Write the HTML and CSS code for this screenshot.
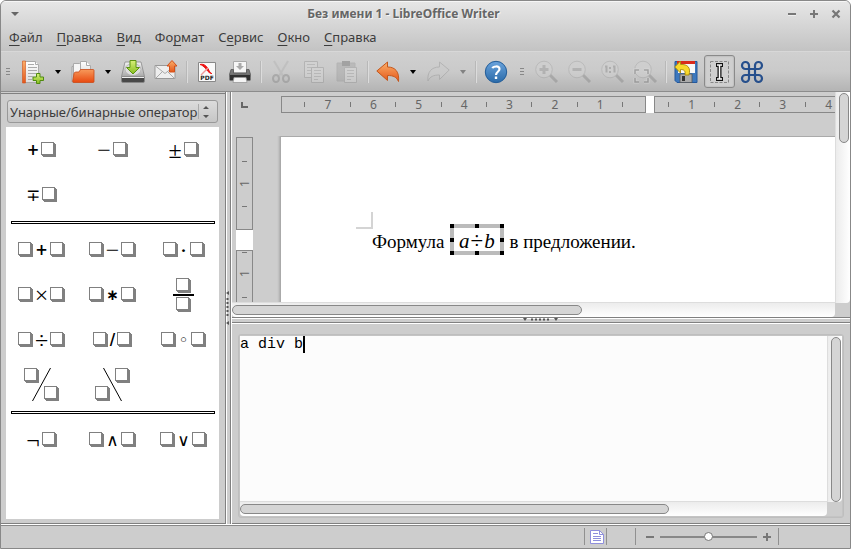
FILE: index.html
```html
<!DOCTYPE html>
<html lang="ru">
<head>
<meta charset="utf-8">
<title>Без имени 1 - LibreOffice Writer</title>
<link rel="stylesheet" href="styles.css">
</head>
<body>
<svg class="defs" width="0" height="0" aria-hidden="true">
  <defs>
    <linearGradient id="orange" x1="0" y1="0" x2="0" y2="1"><stop offset="0" stop-color="#fbb06a"/><stop offset="1" stop-color="#e4561a"/></linearGradient>
    <linearGradient id="green" x1="0" y1="0" x2="0" y2="1"><stop offset="0" stop-color="#d8f07a"/><stop offset="1" stop-color="#86bd1e"/></linearGradient>
    <linearGradient id="paper" x1="0" y1="0" x2="0" y2="1"><stop offset="0" stop-color="#ffffff"/><stop offset="1" stop-color="#dcdcdc"/></linearGradient>
    <linearGradient id="blue" x1="0" y1="0" x2="0" y2="1"><stop offset="0" stop-color="#6aa3dc"/><stop offset="1" stop-color="#2a6aa8"/></linearGradient>
    <linearGradient id="metal" x1="0" y1="0" x2="0" y2="1"><stop offset="0" stop-color="#f4f4f4"/><stop offset="1" stop-color="#a8a8a8"/></linearGradient>
    <linearGradient id="fold" x1="0" y1="0" x2="0" y2="1"><stop offset="0" stop-color="#f79a5b"/><stop offset="1" stop-color="#e8480f"/></linearGradient>
  </defs>
</svg>
<div class="window">
  <div class="chrome">
    <header class="titlebar">
      <button class="win-btn" aria-label="Меню окна"><svg width="10" height="6" viewBox="0 0 10 6"><path d="M1 1h8L5 5z" fill="#666"/></svg></button>
      <h1>Без имени 1 - LibreOffice Writer</h1>
      <div class="win-btns">
        <button class="win-btn" aria-label="Свернуть"><svg width="10" height="10" viewBox="0 0 10 10"><path d="M1 6h8" stroke="#fff"/><path d="M1 5h8" stroke="#777" stroke-width="2"/></svg></button>
        <button class="win-btn" aria-label="Развернуть"><svg width="10" height="10" viewBox="0 0 10 10"><path d="M1 5h8M5 1v8" stroke="#777" stroke-width="2"/></svg></button>
        <button class="win-btn" aria-label="Закрыть"><svg width="10" height="10" viewBox="0 0 10 10"><path d="M1.500 1.500l7 7M8.500 1.500l-7 7" stroke="#777" stroke-width="2.200"/></svg></button>
      </div>
    </header>
    <nav class="menubar">
      <a href="#"><u>Ф</u>айл</a><a href="#"><u>П</u>равка</a><a href="#"><u>В</u>ид</a><a href="#">Фо<u>р</u>мат</a><a href="#">С<u>е</u>рвис</a><a href="#"><u>О</u>кно</a><a href="#"><u>С</u>правка</a>
    </nav>
  </div>
  <div class="toolbar">
    <span class="grip"></span>
    <button class="tool" aria-label="Создать"><svg viewBox="0 0 24 24"><path d="M3.500 1.500h11l3 3v18h-14z" fill="url(#paper)" stroke="#aaa"/><path d="M14.500 1.500v3h3" fill="#fff" stroke="#aaa"/><path d="M1.500 1h3v22h-3z" fill="url(#orange)" stroke="#d0521c" stroke-width=".6"/><path d="M7 4.500h6M7 7.500h9M7 10.500h9M7 13.500h8M7 16.500h5M7 19.500h4" stroke="#aaa"/><path d="M15.500 13.500h3.500v3.500h3.500v3.500h-3.500v3h-3.500v-3h-3.500v-3.500h3.500z" fill="url(#green)" stroke="#4f8a10"/></svg></button>
    <button class="drop" aria-label="Варианты создания"><svg viewBox="0 0 6 4"><path d="M0 0h6L3 4z"/></svg></button>
    <button class="tool" aria-label="Открыть"><svg viewBox="0 0 24 24"><path d="M1 6.500v15.500h2V6z" fill="#ddd" stroke="#999" stroke-width=".8"/><path d="M2.500 3.500h6l2 2v12h-8z" fill="#f6f6f6" stroke="#aaa"/><path d="M9.500 1.500h6l4 4V14h-10z" fill="url(#paper)" stroke="#aaa"/><path d="M15.500 1.500v4h4" fill="#fff" stroke="#aaa"/><path d="M9.500 9.500H22q1 0 1 1v11q0 1-1 1H3q-1.500 0-1.300-1.500L3 13.500Q3.300 12 5 12h3z" fill="url(#fold)" stroke="#c94a18" stroke-width=".8"/></svg></button>
    <button class="drop" aria-label="Последние документы"><svg viewBox="0 0 6 4"><path d="M0 0h6L3 4z"/></svg></button>
    <button class="tool" aria-label="Сохранить"><svg viewBox="0 0 24 24"><path d="M4 2h16l3.500 14.500H.5z" fill="url(#metal)" stroke="#888" stroke-width=".8"/><ellipse cx="12" cy="9.500" rx="8" ry="6" fill="#ddd" stroke="#aaa" stroke-width=".7"/><path d="M.5 17h23v4q0 1.500-1.500 1.500H2Q.5 22.500.5 21z" fill="#484848" stroke="#888" stroke-width=".8"/><path d="M1 17.500h22" stroke="#eee"/><path d="M9 .5h6v7h3.500L12 14 5.500 7.500H9z" fill="url(#green)" stroke="#5c9412"/></svg></button>
    <button class="tool" aria-label="Отправить документ"><svg viewBox="0 0 24 24"><path d="M1 5.500h20v13H1z" fill="#eee" stroke="#999"/><path d="M1.500 18.500l7-7M20.500 18.500l-7-7M1.500 6l9.500 7.500L20.500 6" fill="none" stroke="#aaa"/><path d="M15.500 12V6H13l5-5.500L23 6h-2.500v6z" fill="url(#orange)" stroke="#d2501a"/></svg></button>
    <span class="sep"></span>
    <button class="tool" aria-label="Экспорт в PDF"><svg viewBox="0 0 24 24"><path d="M3.500 2.500h17v19h-17z" fill="#fafafa" stroke="#888"/><path d="M5 4.500c4-1 7 1.500 9 6 1 2 2 3 3 3-2 .5-5-3-6.500-5S7 5 5 4.500z" fill="#e11" stroke="#e11"/><path d="M13 8l-7 7" stroke="#e99" stroke-width="1.500"/><text x="12" y="20" text-anchor="middle" class="pdf">PDF</text></svg></button>
    <button class="tool" aria-label="Печать"><svg viewBox="0 0 24 24"><path d="M5.500 1.500h13V13h-13z" fill="#f6f6f6" stroke="#aaa"/><path d="M10.500 3h3v3H16l-4 4-4-4h2.500z" fill="#aaa"/><path d="M3 9.500h2.500V13h13V9.500H21l1.500 5v2h-21v-2z" fill="#777" stroke="#555" stroke-width=".8"/><path d="M1.500 14.500h21v5q0 1-1 1h-19q-1 0-1-1z" fill="#303030" stroke="#777" stroke-width=".8"/><path d="M6 17.500h12l1 5H5z" fill="#f4f4f4" stroke="#999" stroke-width=".8"/></svg></button>
    <span class="sep"></span>
    <button class="tool off" aria-label="Вырезать" disabled><svg viewBox="0 0 24 24"><path d="M5 1l9 15M19 1l-9 15" stroke="#aaa" stroke-width="2"/><ellipse cx="7" cy="18.500" rx="3" ry="3.500" fill="none" stroke="#777" stroke-width="2"/><ellipse cx="17" cy="18.500" rx="3" ry="3.500" fill="none" stroke="#777" stroke-width="2"/></svg></button>
    <button class="tool off" aria-label="Копировать" disabled><svg viewBox="0 0 24 24"><path d="M2.500 1.500h13v16h-13z" fill="#ddd" stroke="#888"/><path d="M5 4.500h8M5 7.500h8M5 10.500h4M5 13.500h4" stroke="#999"/><path d="M9.500 7.500h12v15h-12z" fill="#ddd" stroke="#888"/><path d="M12 10.500h7M12 13.500h7M12 16.500h7M12 19.500h4" stroke="#999"/></svg></button>
    <button class="tool off" aria-label="Вставить" disabled><svg viewBox="0 0 24 24"><path d="M2 3h18v18H2z" fill="#999" stroke="#888"/><path d="M7 1h8v5H7z" fill="#555"/><path d="M9.500 7.500h12v15h-12z" fill="#ddd" stroke="#888"/><path d="M12 10.500h7M12 13.500h7M12 16.500h7M12 19.500h4" stroke="#999"/></svg></button>
    <span class="sep"></span>
    <button class="tool" aria-label="Отменить"><svg viewBox="0 0 24 24"><path d="M.8 11L11.500 2v5c8 0 12 5 11 14.500-2-4.500-5-6-11-6v5z" fill="url(#orange)" stroke="#c4571c"/></svg></button>
    <button class="drop" aria-label="История отмен"><svg viewBox="0 0 6 4"><path d="M0 0h6L3 4z"/></svg></button>
    <button class="tool off" aria-label="Вернуть" disabled><svg viewBox="0 0 24 24"><path d="M23.200 10L13.500 2v5C5.500 7 1 12 2 21c2-4.500 5.500-6 11.500-6v4.500z" fill="#ccc" stroke="#888"/></svg></button>
    <button class="drop off" aria-label="История возвратов" disabled><svg viewBox="0 0 6 4"><path d="M0 0h6L3 4z"/></svg></button>
    <span class="sep"></span>
    <button class="tool" aria-label="Справка"><svg viewBox="0 0 24 24"><circle cx="12" cy="12" r="10.700" fill="url(#blue)" stroke="#225c98"/><path d="M8.500 8.300C9 6.500 15.500 5 15.500 9c0 2.800-3.500 2.800-3.500 6" fill="none" stroke="#fff" stroke-width="2.200"/><path d="M10.800 16.500h2.400v2.500h-2.400z" fill="#fff"/></svg></button>
    <span class="grip mid"></span>
    <button class="tool off" aria-label="Увеличить" disabled><svg viewBox="0 0 24 24"><path d="M16 15l7 7" stroke="#777" stroke-width="3"/><circle cx="10" cy="9.500" r="8.300" fill="#d4d4d4" stroke="#999"/><path d="M10 5v9M5.500 9.500h9" stroke="#888" stroke-width="3"/></svg></button>
    <button class="tool off" aria-label="Уменьшить" disabled><svg viewBox="0 0 24 24"><path d="M16 15l7 7" stroke="#777" stroke-width="3"/><circle cx="10" cy="9.500" r="8.300" fill="#d4d4d4" stroke="#999"/><path d="M5.500 9.500h9" stroke="#888" stroke-width="3"/></svg></button>
    <button class="tool off" aria-label="Масштаб 1:1" disabled><svg viewBox="0 0 24 24"><path d="M16 15l7 7" stroke="#777" stroke-width="3"/><circle cx="10" cy="9.500" r="8.300" fill="#d4d4d4" stroke="#999"/><path d="M5 6.500h1.500v6M13 6.500h1.500v6" fill="none" stroke="#777" stroke-width="2"/><path d="M9 7h2v2H9zM9 11h2v2H9z" fill="#777"/></svg></button>
    <button class="tool off" aria-label="Показать всё" disabled><svg viewBox="0 0 24 24"><path d="M16 15l7 7" stroke="#777" stroke-width="3"/><circle cx="10" cy="9.500" r="8.300" fill="#d4d4d4" stroke="#999"/><path d="M2 14v-4h4M11 10h4v4M15 18v4h-4M6 22H2v-4" fill="none" stroke="#eee" stroke-width="3"/><path d="M2 14v-4h4M11 10h4v4M15 18v4h-4M6 22H2v-4" fill="none" stroke="#555" stroke-width="1.500"/></svg></button>
    <span class="sep"></span>
    <button class="tool" aria-label="Обновить"><svg viewBox="0 0 24 24"><path d="M1 1.500h22v21H3l-2-2z" fill="#3d78bd" stroke="#24589c"/><path d="M4 1h17v12H4z" fill="#f8f8f8"/><path d="M3 1h18v3H3z" fill="#d92a1c"/><path d="M6 14h12v8.500H6z" fill="#aaa" stroke="#555" stroke-width=".8"/><path d="M8 16h3v5H8z" fill="#333"/><path d="M.7 7L6.500 1v3.500c7-.5 10.500 3 8.500 10.500h-4c.5-4-.5-5.500-4.500-5.500V13z" fill="#f8d82c" stroke="#a88808" stroke-width=".9"/></svg></button>
    <button class="tool on" aria-label="Курсор формулы" aria-pressed="true"><svg viewBox="0 0 24 24"><path d="M2.500 1.500h18v21h-18z" fill="none" stroke="#888" stroke-dasharray="3 1.500"/><path d="M8 5h3l.5.500L12 5h3M11.500 5v14M8 19h3l.5-.5.5.5h3" fill="none" stroke="#111" stroke-width="4"/><path d="M9 5h2l.5.500L12 5h2M11.500 5v14M9 19h2l.5-.5.5.5h2" fill="none" stroke="#fff" stroke-width="1.500"/></svg></button>
    <button class="tool" aria-label="Каталог"><svg viewBox="0 0 24 24"><path d="M9 9V5.500A3.500 3.500 0 1 0 5.500 9h13A3.500 3.500 0 1 0 15 5.500v13a3.500 3.500 0 1 0 3.500-3.500h-13A3.500 3.500 0 1 0 9 18.500z" fill="none" stroke="#264f8c" stroke-width="2.200"/></svg></button>
  </div>
  <main>
    <aside class="elements">
      <label class="picker"><select aria-label="Категория элементов"><option>Унарные/бинарные оператор</option></select>
        <svg width="19" height="15" viewBox="0 0 19 15"><path d="M.5 0v15" stroke="#aaa"/><path d="M5 5h6L8 2zM5 11h6L8 14z" fill="#555"/></svg></label>
      <div class="panel">
        <div class="cells">
          <button><span class="m">+</span><i></i></button><button>−<i></i></button><button>±<i></i></button>
          <button><span class="s">∓</span><i></i></button>
        </div>
        <hr>
        <div class="cells">
          <button><i></i><span class="m">+</span><i></i></button><button><i></i>−<i></i></button><button><i></i>·<i></i></button>
          <button><i></i>×<i></i></button><button><i></i><span class="m">∗</span><i></i></button><button class="frac"><i></i><b></b><i></i></button>
          <button><i></i>÷<i></i></button><button><i></i><span class="m">/</span><i></i></button><button><i></i><span class="s">◦</span><i></i></button>
          <button class="wide"><i class="up"></i><svg width="19" height="33" viewBox="0 0 19 33"><path d="M18.500 0L.5 33" stroke="#000"/></svg><i class="down"></i></button>
          <button class="wide"><i class="down"></i><svg width="19" height="33" viewBox="0 0 19 33"><path d="M.5 0l18 33" stroke="#000"/></svg><i class="up"></i></button>
        </div>
        <hr>
        <div class="cells">
          <button>¬<i></i></button><button><i></i><span class="s">∧</span><i></i></button><button><i></i><span class="s">∨</span><i></i></button>
        </div>
      </div>
    </aside>
    <div class="split-v"><svg width="4" height="34" viewBox="0 0 4 34"><path d="M3 0v4L0 2zM3 30v4l-3-2z" fill="#555"/><path d="M1.500 7v20" stroke="#555" stroke-width="2" stroke-dasharray="2 2"/></svg></div>
    <section class="work">
      <div class="document">
        <div class="view">
          <div class="ruler-row">
            <span class="tab-kind"></span>
            <div class="ruler left"><span>7</span><span>6</span><span>5</span><span>4</span><span>3</span><span>2</span><span>1</span><span></span></div>
            <span class="ruler-gap"></span>
            <div class="ruler right"><span>1</span><span>2</span><span>3</span><span>4</span><span></span></div>
          </div>
          <div class="canvas">
            <div class="v-ruler"><div class="v-top"><span>1</span></div><div class="v-gap"></div><div class="v-bottom"><span>1</span></div></div>
            <article class="page">
              <span class="corner"></span>
              <p>Формула <span class="object"><em>a</em><span>÷</span><em>b</em></span> в предложении.</p>
            </article>
          </div>
          <div class="scroll-h"><span></span></div>
        </div>
        <div class="scroll-v"><span></span></div>
      </div>
      <div class="split-h"><svg width="36" height="4" viewBox="0 0 36 4"><path d="M0 0h4L2 3zM31 0h4l-2 3z" fill="#555"/><path d="M8 1.500h19" stroke="#555" stroke-width="2" stroke-dasharray="2 2"/></svg></div>
      <div class="command">
        <div class="command-box">
          <div class="command-main">
            <div class="editor"><textarea aria-label="Команды" spellcheck="false">a div b</textarea><span class="caret"></span></div>
            <div class="scroll-h"><span></span></div>
          </div>
          <div class="scroll-v"><span></span></div>
        </div>
      </div>
    </section>
  </main>
  <footer>
    <span class="cell doc"><svg width="14" height="14" viewBox="0 0 14 14"><path d="M.5.500h9l4 4v9H.5z" fill="#fff" stroke="#8f8fdc"/><path d="M9.500.500v4h4" fill="none" stroke="#8f8fdc"/><path d="M3 3.500h5M3 6.500h8M3 8.500h8M3 10.500h8" stroke="#8f8fdc"/></svg></span>
    <span class="cell"></span>
    <span class="cell zoom">
      <button aria-label="Уменьшить масштаб"><svg width="8" height="8" viewBox="0 0 8 8"><path d="M0 4h8" stroke="#777" stroke-width="2"/></svg></button>
      <input type="range" aria-label="Масштаб" min="0" max="100" value="50">
      <button aria-label="Увеличить масштаб"><svg width="8" height="8" viewBox="0 0 8 8"><path d="M0 4h8M4 0v8" stroke="#777" stroke-width="2"/></svg></button>
    </span>
    <span class="cell rest"></span>
  </footer>
</div>
</body>
</html>
```
FILE: styles.css
```css
* { box-sizing: border-box; }
body { margin: 0; background: #fff; font: 13px/18px "Noto Sans", sans-serif; color: #3c3c3c; }
button { border: 0; padding: 0; background: none; color: inherit; font: inherit; }
svg { display: block; }
.defs { position: absolute; }
.window { display: flex; flex-direction: column; height: 100vh; border: 1px solid #888; border-radius: 6px 6px 0 0; background: #cdcdcd; overflow: hidden; }

.chrome { background: linear-gradient(#e6e6e6, #c3c3c3); border-top: 1px solid #f6f6f6; }
.titlebar { display: flex; align-items: center; height: 24px; padding: 0 9px; }
.titlebar h1 { flex: 1; margin: 0; font-size: 12px; line-height: 18px; text-align: center; color: #666; text-shadow: 1px 1px 0 #f4f4f4; }
.win-btn { display: grid; place-items: center; width: 10px; height: 16px; }
.win-btns { display: flex; gap: 12px; }
.menubar { display: flex; gap: 14px; height: 25px; padding: 2px 8px 0; }
.menubar a { color: inherit; text-decoration: none; }
.menubar u { text-underline-offset: 3px; }

.toolbar { display: flex; align-items: center; height: 41px; padding-left: 5px; background: linear-gradient(#d0d0d0, #cacaca 50%, #b4b4b4); border-top: 1px solid #d8d8d8; border-bottom: 1px solid #8c8c8c; }
.grip { width: 10px; height: 8px; background: repeating-linear-gradient(#888 0 1px, transparent 1px 3px) no-repeat 0 0 / 4px 8px; }
.grip.mid { width: 17px; background-position: 8px 0; }
.tool { display: grid; place-items: center; flex: none; width: 33px; height: 33px; border-radius: 3px; }
.tool svg { width: 24px; height: 24px; }
.tool.on { width: 31px; margin: 0 0 0 2px; border: 1px solid #8a8a8a; background: #cfcfcf; box-shadow: inset 0 0 1px 1px #c0c0c0; }
.off svg { opacity: .35; }
.pdf { font: bold 6px "DejaVu Sans", sans-serif; fill: #222; }
.drop { display: grid; place-items: center; flex: none; width: 17px; height: 33px; }
.drop svg { width: 6px; height: 4px; }
.sep { flex: none; width: 8px; height: 22px; background: linear-gradient(90deg, #b8b8b8 50%, #dcdcdc 50%) no-repeat 4px 0 / 2px 22px; }

main { display: flex; flex: 1; min-height: 0; }
.elements { display: flex; flex-direction: column; flex: none; width: 224px; margin-top: 1px; padding: 6px 6px 4px 5px; border-top: 1px solid #808080; border-bottom: 1px solid #808080; }
.picker { display: flex; align-items: center; height: 23px; margin: 0 1px; border: 1px solid #999; border-radius: 3px; background: linear-gradient(#dcdcdc, #c6c6c6); }
.picker select { flex: 1; min-width: 0; appearance: none; height: 21px; padding: 0 0 0 2px; border: 0; background: none; color: inherit; font: inherit; }
.panel { flex: 1; margin-top: 4px; background: #fff; min-height: 0; overflow: hidden; }
.cells { display: grid; grid-template-columns: repeat(3, 1fr); grid-auto-rows: 45px; }
.panel button { display: flex; align-items: center; justify-content: center; gap: 2px; font: 24px/20px "Liberation Serif", serif; color: #000; }
.panel .m { font: bold 15px/20px "DejaVu Sans", sans-serif; }
.panel .s { font: 17px/20px "DejaVu Sans", sans-serif; }
.panel i { flex: none; width: 13px; height: 13px; margin: 0 2px 2px 0; border: 1px solid #808080; background: #fff; box-shadow: 1px 1px #808080, 2px 2px #808080; }
.panel hr { height: 3px; margin: 4px 4px 3px 5px; border: 1px solid #000; }
.panel .frac { flex-direction: column; gap: 1px; }
.frac b { width: 21px; height: 2px; background: #000; }
.panel .wide { gap: 0; padding: 6px 0; }
.wide svg { flex: none; margin: 0 -7px; }
.up { align-self: flex-start; }
.down { align-self: flex-end; }
.split-v { display: grid; place-items: center; flex: none; width: 6px; border: solid #808080; border-width: 0 1px; box-shadow: inset 1px 0 #fff; }
.work { display: flex; flex-direction: column; flex: 1; min-width: 0; border-left: 1px solid #fff; }

.document { display: flex; flex: 224 1 0; min-height: 0; }
.view { display: flex; flex-direction: column; flex: 1; min-width: 0; }
.ruler-row { display: flex; flex: none; padding: 4px 0 23px 9px; color: #666; }
.tab-kind { width: 7px; height: 6px; margin: 6px 33px 0 0; border: solid #666; border-width: 0 0 2px 2px; }
.ruler { display: grid; height: 17px; border: 1px solid #888; font-size: 12px; line-height: 15px; }
.ruler.left { flex: none; width: 365px; grid-template-columns: repeat(8, 1fr); }
.ruler.right { flex: 1; min-width: 0; overflow: hidden; grid-template-columns: 36px 46px 45px 46px 45px; border-right: 0; }
.ruler-gap { flex: none; width: 8px; background: #fff; }
.ruler span { display: flex; justify-content: flex-end; margin-right: -4px; background: linear-gradient(#777, #777) no-repeat right 26px center / 1px 5px; }
.canvas { display: flex; flex: 1; min-height: 0; padding-left: 4px; overflow: hidden; }
.v-ruler { flex: none; width: 17px; margin: 1px 27px 0 0; color: #666; font-size: 12px; line-height: 15px; }
.v-ruler span { display: block; width: 15px; writing-mode: vertical-rl; transform: rotate(180deg); }
.v-top, .v-bottom { border: 1px solid #888; background: linear-gradient(#777, #777) no-repeat 5px 23px / 5px 1px, linear-gradient(#777, #777) no-repeat 5px 68px / 5px 1px; }
.v-top { height: 93px; padding-top: 42px; }
.v-gap { height: 20px; background: #fff; }
.v-bottom { height: 93px; padding-top: 19px; background-position: 5px 1px, 5px 46px; }
.page { position: relative; flex: 1; min-width: 0; min-height: 400px; padding: 87px 0 0 91px; border: solid #aaa; border-width: 1px 0 0 1px; background: #fff; box-shadow: -1px -1px 2px #aaa; font: 19px/32px "Liberation Serif", serif; color: #000; white-space: nowrap; }
.page p { margin: 0; }
.corner { position: absolute; left: 75px; top: 75px; width: 17px; height: 17px; border: solid #d4d4d4; border-width: 0 2px 2px 0; }
.object { display: inline-block; height: 31px; margin: 0 1px; padding: 0 5px; border: 4px solid transparent; line-height: 25px; font-size: 21px;
  --h: linear-gradient(#000, #000) no-repeat;
  background: var(--h) left top / 4px 4px border-box, var(--h) center top / 4px 4px border-box, var(--h) right top / 4px 4px border-box, var(--h) left center / 4px 4px border-box, var(--h) right center / 4px 4px border-box, var(--h) left bottom / 4px 4px border-box, var(--h) center bottom / 4px 4px border-box, var(--h) right bottom / 4px 4px border-box, linear-gradient(#fff, #fff) padding-box, #bbb border-box; }
.object span { margin: 0 1px; font-size: 23px; }

.scroll-v { flex: none; width: 15px; padding: 1px 2px 0 3px; border-left: 1px solid #ddd; border-radius: 0 0 4px 0; background: linear-gradient(90deg, #ececec, #fff); }
.scroll-h { flex: none; height: 15px; padding: 2px 0; border-top: 1px solid #ddd; border-radius: 0 0 4px 4px; background: linear-gradient(#ececec, #fff); }
.scroll-v span, .scroll-h span { display: block; border: 1px solid #888; border-radius: 5px; background: #d5d5d5; }
.scroll-h span { height: 10px; width: 58%; }
.scroll-v span { width: 10px; height: 50px; }
.document .scroll-v { margin-bottom: 14px; }
.split-h { display: grid; place-items: center; flex: none; height: 6px; border: solid #808080; border-width: 1px 0; box-shadow: inset 0 1px #fff, 0 1px #fff; }
.command { display: flex; flex: 184 1 0; min-height: 0; padding: 11px 6px 5px 6px; border-bottom: 1px solid #808080; }
.command-box { display: flex; flex: 1; min-width: 0; border: 1px solid #bebebe; border-radius: 3px; box-shadow: inset 0 0 0 1px #c4c4c4; padding: 1px; }
.command-main { display: flex; flex-direction: column; flex: 1; min-width: 0; }
.editor { position: relative; flex: 1; min-height: 0; background: #fcfcfc; }
textarea { display: block; width: 100%; height: 100%; padding: 0; border: 0; resize: none; outline: 0; overflow: hidden; background: none; color: #000; font: 15px/17px "Liberation Mono", monospace; }
.caret { position: absolute; left: 63px; top: 0; width: 2px; height: 17px; background: #000; }
.command .scroll-h span { width: 73%; }
.command .scroll-v { margin-bottom: 14px; }
.command .scroll-v span { height: 100%; }

footer { display: flex; justify-content: flex-end; flex: none; height: 24px; border-top: 1px solid #fff; box-shadow: inset 0 1px #888; padding: 3px 0; }
.cell { display: flex; align-items: center; border-left: 1px solid #909090; width: 29px; }
.cell.doc { width: 22px; padding-left: 5px; }
.cell.doc svg { flex: none; }
.cell.zoom { width: 143px; padding: 0 7px 0 10px; gap: 6px; justify-content: space-between; }
.cell.rest { width: 72px; }
input[type="range"] { flex: 1; min-width: 0; height: 10px; margin: 0; appearance: none; background: linear-gradient(#888, #888) no-repeat center / 100% 2px; }
input[type="range"]::-webkit-slider-thumb { appearance: none; width: 9px; height: 9px; border: 1px solid #777; border-radius: 50%; background: #fff; }
```
